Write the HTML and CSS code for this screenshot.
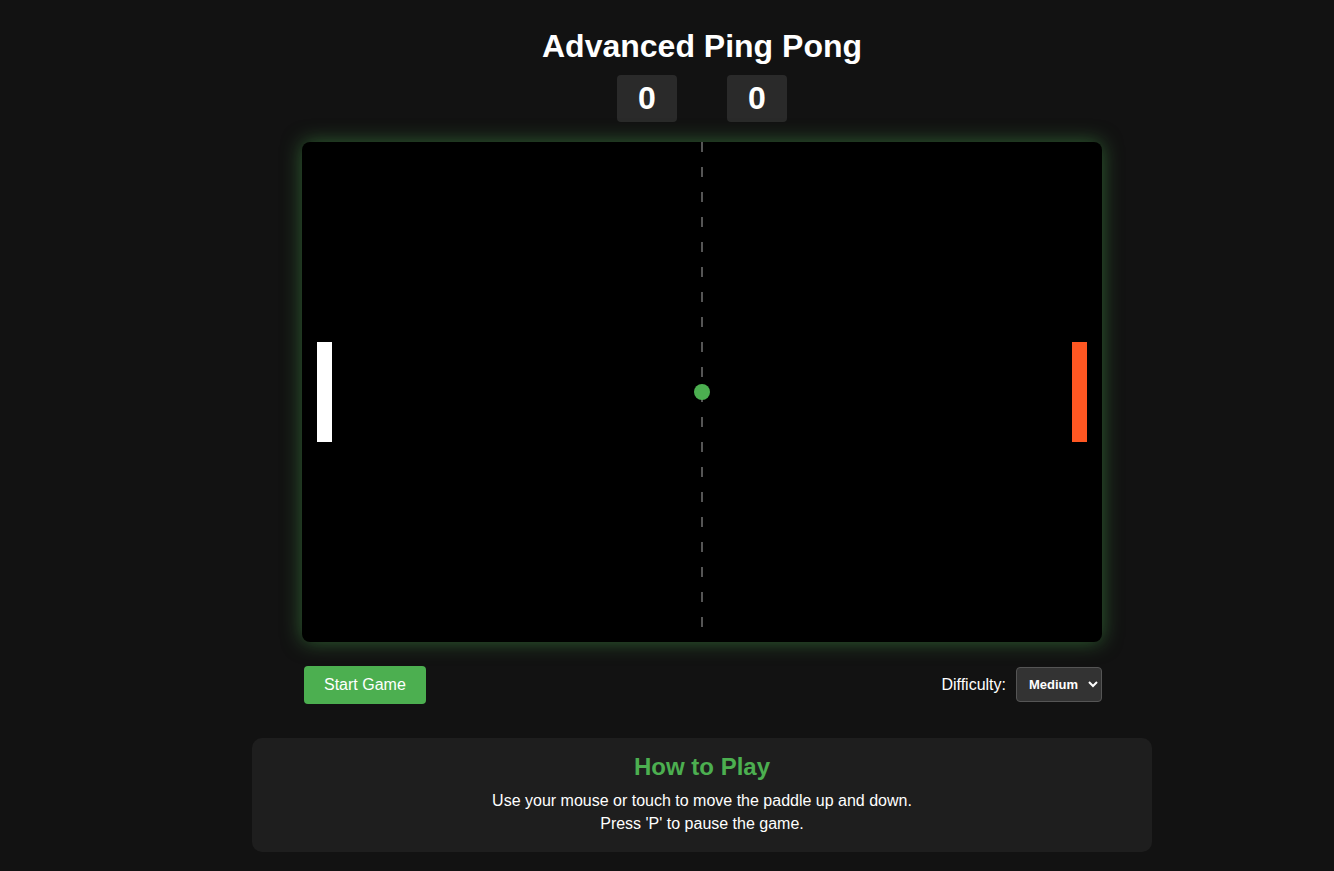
FILE: index.html
```html
<!DOCTYPE html>
<html lang="en">
<head>
<meta charset="UTF-8">
<title>Advanced Ping Pong</title>
<link rel="stylesheet" href="styles.css">
</head>
<body>
<main class="app">
  <h1 class="title">Advanced Ping Pong</h1>
  <div class="scores">
    <div class="score">0</div>
    <div class="score">0</div>
  </div>
  <div class="board">
    <div class="net"></div>
    <div class="paddle paddle-left"></div>
    <div class="paddle paddle-right"></div>
    <div class="ball"></div>
  </div>
  <div class="controls">
    <button class="start-btn">Start Game</button>
    <div class="difficulty">
      <label for="diff">Difficulty:</label>
      <select id="diff" class="diff-select">
        <option>Easy</option>
        <option selected>Medium</option>
        <option>Hard</option>
      </select>
    </div>
  </div>
  <section class="howto">
    <h2 class="howto-title">How to Play</h2>
    <p class="howto-text">Use your mouse or touch to move the paddle up and down.</p>
    <p class="howto-text">Press 'P' to pause the game.</p>
  </section>
</main>
</body>
</html>
```
FILE: styles.css
```css
html, body {
  margin: 0;
  background: #121212;
  color: #ffffff;
  font-family: "Liberation Sans", Arial, sans-serif;
}
body {
  padding-left: 70px;
}
.app {
  width: 900px;
  margin: 0 auto;
  padding-top: 28px;
  display: flex;
  flex-direction: column;
  align-items: center;
}
.title {
  margin: 0;
  font-size: 32px;
  line-height: 37px;
  font-weight: bold;
}
.scores {
  margin-top: 10px;
  display: flex;
  gap: 50px;
}
.score {
  width: 60px;
  height: 47px;
  background: #2a2a2a;
  border-radius: 4px;
  font-size: 32px;
  font-weight: bold;
  line-height: 47px;
  text-align: center;
}
.board {
  position: relative;
  margin-top: 20px;
  width: 800px;
  height: 500px;
  background: #000;
  border-radius: 8px;
  box-shadow: 0 0 20px rgba(76, 175, 80, 0.5);
}
.net {
  position: absolute;
  left: 399px;
  top: 0;
  width: 2px;
  height: 486px;
  background: repeating-linear-gradient(to bottom, #555 0 10px, transparent 10px 25px);
}
.paddle {
  position: absolute;
  top: 200px;
  width: 15px;
  height: 100px;
}
.paddle-left {
  left: 15px;
  background: #ffffff;
}
.paddle-right {
  left: 770px;
  background: #ff5722;
}
.ball {
  position: absolute;
  left: 392px;
  top: 242px;
  width: 16px;
  height: 16px;
  border-radius: 50%;
  background: #4caf50;
}
.controls {
  margin-top: 24px;
  width: 800px;
  display: flex;
  justify-content: space-between;
  align-items: flex-start;
}
.start-btn {
  margin-left: 2px;
  height: 38px;
  padding: 0 20px;
  background: #4caf50;
  color: #fff;
  border: none;
  border-radius: 4px;
  font-family: "Liberation Sans", Arial, sans-serif;
  font-size: 16px;
}
.difficulty {
  margin-top: 1px;
  display: flex;
  align-items: center;
  gap: 10px;
  font-size: 16px;
}
.diff-select {
  width: 86px;
  height: 35px;
  background: #333;
  color: #fff;
  border: 1px solid #555;
  border-radius: 4px;
  font-family: "Liberation Sans", Arial, sans-serif;
  font-size: 13px;
  font-weight: bold;
  padding: 0 6px 0 8px;
}
.howto {
  margin-top: 34px;
  width: 900px;
  box-sizing: border-box;
  padding: 15px 20px 17px;
  background: #1e1e1e;
  border-radius: 10px;
  text-align: center;
}
.howto-title {
  margin: 0 0 8px;
  color: #4caf50;
  font-size: 24px;
  line-height: 28px;
  font-weight: bold;
}
.howto-text {
  margin: 0;
  font-size: 16px;
  line-height: 23px;
}
```
